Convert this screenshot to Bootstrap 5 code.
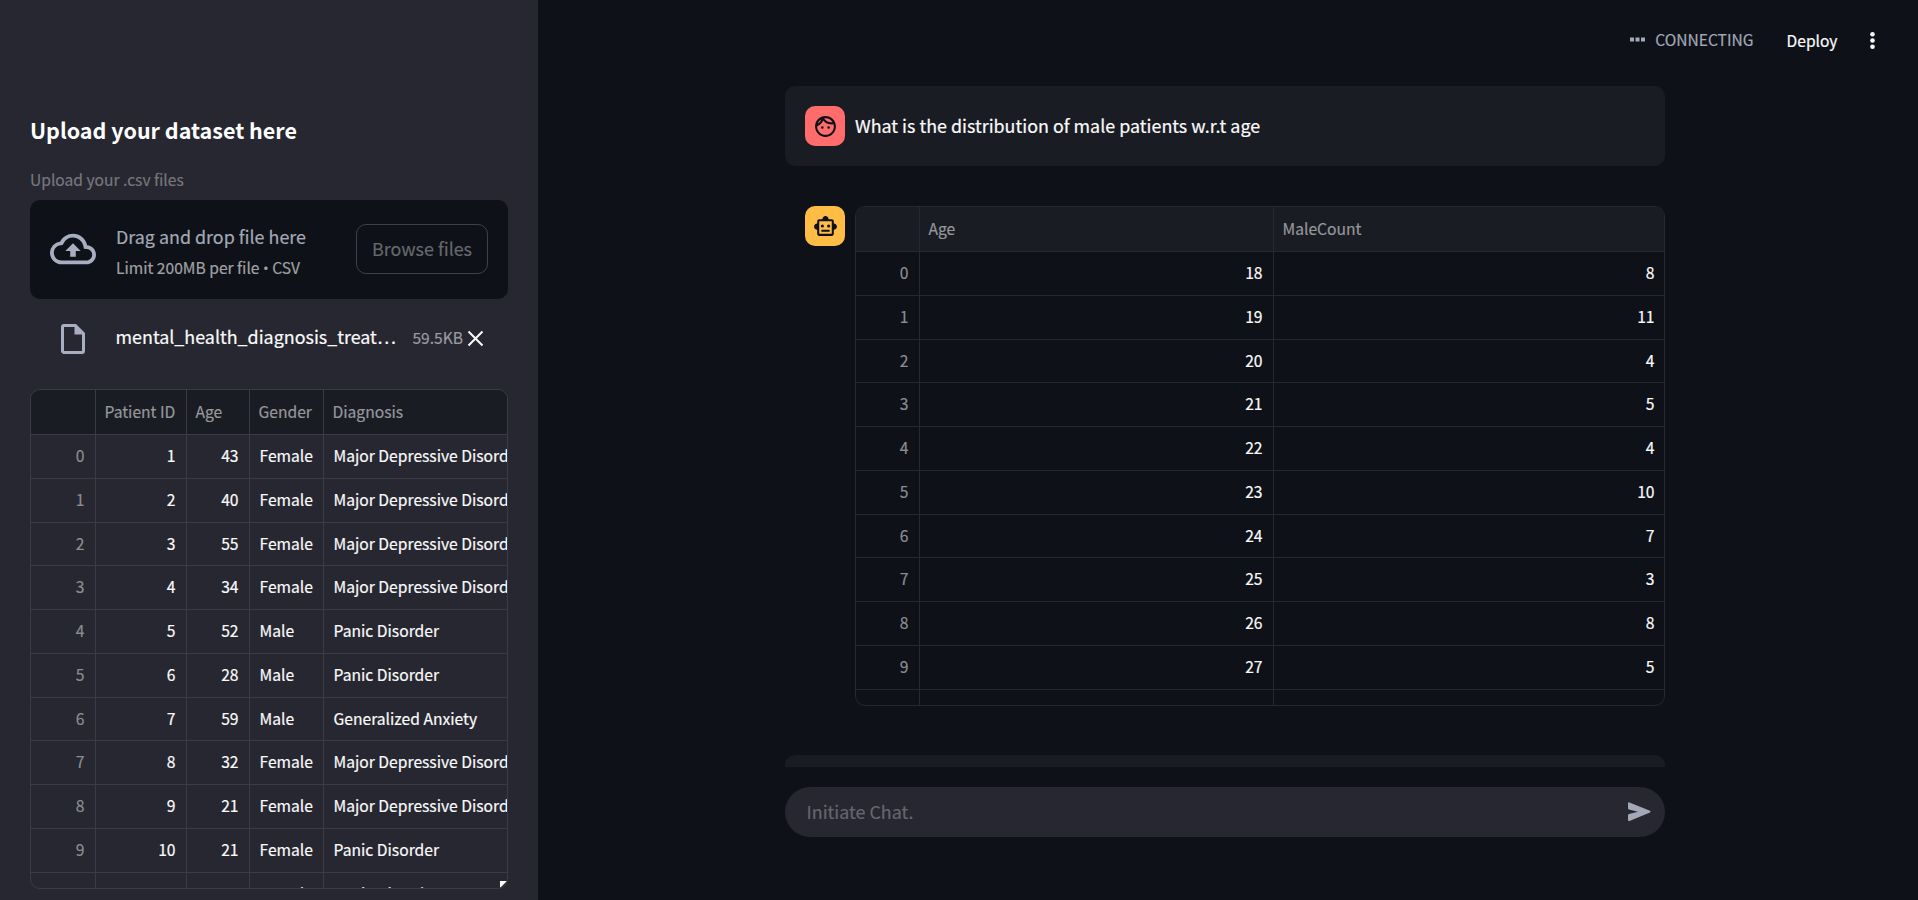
<!DOCTYPE html>
<html lang="en" data-bs-theme="dark">
<head>
<meta charset="utf-8">
<title>Dataset chat</title>
<link href="https://cdn.jsdelivr.net/npm/bootstrap@5.3.0/dist/css/bootstrap.min.css" rel="stylesheet">
<style>
body{background:#0e1117;color:#fafafa;font-family:"Noto Sans CJK SC","Source Sans Pro",sans-serif;font-size:17.9px;line-height:30px;-webkit-text-stroke:.2px currentColor}
.side{width:538px;background:#262730;padding:113px 30px 0}
.side h2{font-size:21.5px;font-weight:700;line-height:34px;color:#fff;-webkit-text-stroke:0}
.fs-s{font-size:15.6px}
.upl-label{color:#76777d;line-height:24px;margin-top:20px;margin-bottom:9px}
.drop{background:#0e1117;border-radius:10px;height:99px;padding:0 20px}
.drop>svg{margin-top:-2px}
.drop .t1{color:#a3a8b4;line-height:28px;margin-top:2px}
.drop .t2{color:#a0a1a4;line-height:24px;margin-top:5px}
.dot{font-family:"Open Sans",sans-serif;font-size:15px}
.btn-browse{width:132px;height:50px;border:1px solid #3f4145;border-radius:10px;color:#66686c;font-size:17.9px;padding:0 0 2px;margin-top:-1px}
.file-row{height:90px;padding:0 20px 11px 25px}
.fname{margin:-5px 0 0 24.500px}
.fsize{color:#999aa2;margin-top:-4px}
.grid{--ln:#3a3b44;border:1px solid var(--ln);border-radius:10px;height:500px;font-size:15.65px}
.grid-main{--ln:#26282d}
.g-row{display:grid;height:43.75px;border-bottom:1px solid var(--ln);line-height:42px}
.g-head{height:45px;background:#1a1c23;color:#96979b;line-height:44px}
.g-row>div{padding:0 10.5px 0 9.500px;white-space:nowrap;border-right:1px solid var(--ln)}
.g-row.g-head>div{padding:0 0 0 8.5px}
.g-row>div:last-child{border-right:0}
.g-side .g-row{grid-template-columns:65px 91px 63px 74px 1fr}
.g-side .g-row>div:last-child{padding-right:0}
.g-main .g-row{grid-template-columns:64px 354px 1fr}
.g-main .g-row>div:last-child{padding-right:9.500px}
.g-row>.ix{color:#8c8d91}
.handle{right:0;bottom:0}
.top{height:86px;padding-right:32px}
.status{height:79px}
.conn{color:#a3a8b8;margin:-2px 33px 0 9.500px}
.deploy{margin-right:22.500px}
.chat-col{width:880px;margin-right:6px}
.msg{background:#1a1c23;border-radius:10px;height:80px;padding:20px}
.ava{width:40px;height:40px;border-radius:10px}
.ava-user{background:#ff6c6c}
.ava-bot{background:#ffbd45}
.q{margin:-3px 0 0 10px}
.answer{margin:40px 0 49px;padding-left:20px;gap:10px}
.nextmsg{height:12px;background:#1a1c23;border-radius:10px 10px 0 0}
.ask{height:50px;border-radius:25px;background:#262730;color:#65666f;padding:0 13px 0 21.5px;margin-top:20px}
.ask span{margin-top:-3px}
</style>
</head>
<body class="vh-100 overflow-hidden d-flex">
<aside class="side flex-shrink-0 vh-100 overflow-hidden">
  <h2 class="m-0">Upload your dataset here</h2>
  <div class="upl-label fs-s">Upload your .csv files</div>
  <div class="drop d-flex align-items-center">
    <svg width="46" height="46" viewBox="0 0 24 24" fill="#a9adc1"><path d="M19.35 10.04A7.49 7.49 0 0 0 12 4C9.11 4 6.6 5.64 5.35 8.04A5.994 5.994 0 0 0 0 14c0 3.31 2.69 6 6 6h13c2.76 0 5-2.24 5-5 0-2.64-2.05-4.78-4.65-4.96zM19 18H6c-2.21 0-4-1.79-4-4 0-2.05 1.53-3.76 3.56-3.97l1.07-.11.5-.95A5.469 5.469 0 0 1 12 6c2.62 0 4.88 1.86 5.39 4.43l.3 1.5 1.53.11A2.98 2.98 0 0 1 22 15c0 1.65-1.35 3-3 3zM8 13h2.55v3h2.9v-3H16l-4-4z"/></svg>
    <div class="ms-3 ps-1 flex-grow-1"><div class="t1">Drag and drop file here</div><div class="t2 fs-s">Limit 200MB per file <span class="dot">•</span> CSV</div></div>
    <button class="btn btn-browse">Browse files</button>
  </div>
  <div class="file-row d-flex align-items-center">
    <svg width="36" height="36" viewBox="0 0 24 24" fill="#a9adc1"><path fill-rule="evenodd" d="M6 2a2 2 0 0 0-2 2v16c0 1.1.9 2 2 2h12a2 2 0 0 0 2-2V8l-6-6H6zm0 2h7v5h5v11H6z"/></svg>
    <div class="flex-grow-1 fname">mental_health_diagnosis_treat…</div>
    <div class="fs-s fsize">59.5KB</div>
    <svg width="25" height="25" viewBox="0 0 25 25" stroke="#fafafa" stroke-width="2" fill="none"><path d="M5.5 5.5l14 14m0-14l-14 14"/></svg>
  </div>
  <div class="grid g-side position-relative overflow-hidden" id="patients">
    <svg class="handle position-absolute" width="7" height="7"><path d="M0 0h7L0 7z" fill="#fff"/></svg>
  </div>
</aside>
<main class="flex-grow-1 d-flex flex-column align-items-center">
  <header class="top w-100 d-flex justify-content-end">
    <div class="d-flex align-items-center fs-s status">
      <svg width="16" height="5" fill="#a3a8b8"><path d="M0 .5h4v4H0zm5.500 0h4v4h-4zm5.500 0h4v4h-4z"/></svg>
      <span class="conn">CONNECTING</span><span class="deploy">Deploy</span>
      <svg width="26" height="26" viewBox="0 0 26 26" fill="#fafafa"><circle cx="12.5" cy="7.200" r="2.300"/><circle cx="12.5" cy="13.500" r="2.300"/><circle cx="12.5" cy="19.800" r="2.300"/></svg>
    </div>
  </header>
  <div class="chat-col">
    <div class="msg d-flex align-items-center">
      <div class="ava ava-user d-flex align-items-center justify-content-center">
        <svg width="25" height="25" viewBox="0 0 24 24" fill="#0e1117"><path d="M10.250 13a1.250 1.250 0 1 1-2.500 0 1.250 1.250 0 0 1 2.500 0zM15 11.750a1.250 1.250 0 1 0 0 2.500 1.250 1.250 0 0 0 0-2.500zM22 12c0 5.520-4.480 10-10 10S2 17.520 2 12 6.480 2 12 2s10 4.480 10 10zM10.660 4.120C12.060 6.440 14.600 8 17.500 8c.460 0 .910-.050 1.340-.120C17.440 5.560 14.900 4 12 4c-.460 0-.910.050-1.340.120zM4.420 9.470a8.046 8.046 0 0 0 3.660-4.440 8.046 8.046 0 0 0-3.660 4.440zM20 12c0-.780-.120-1.530-.330-2.240-.700.150-1.420.240-2.170.240a10 10 0 0 1-7.760-3.690A10.016 10.016 0 0 1 4 11.860c.010.040 0 .090 0 .140 0 4.410 3.590 8 8 8s8-3.590 8-8z"/></svg>
      </div>
      <div class="q">What is the distribution of male patients w.r.t age</div>
    </div>
    <div class="d-flex answer">
      <div class="ava ava-bot d-flex align-items-center justify-content-center flex-shrink-0">
        <svg width="25" height="25" viewBox="0 0 24 24" fill="#0e1117"><path d="M20 9V7c0-1.100-.900-2-2-2h-3c0-1.660-1.340-3-3-3S9 3.340 9 5H6c-1.100 0-2 .900-2 2v2c-1.660 0-3 1.340-3 3s1.340 3 3 3v4c0 1.100.900 2 2 2h12c1.100 0 2-.900 2-2v-4c1.660 0 3-1.340 3-3s-1.340-3-3-3zm-2 10H6V7h12v12zm-9-6a1.500 1.500 0 1 1 0-3 1.500 1.500 0 0 1 0 3zm7.500-1.500a1.500 1.500 0 1 1-3 0 1.500 1.500 0 0 1 3 0zM8 15h8v2H8z"/></svg>
      </div>
      <div class="grid grid-main g-main overflow-hidden flex-grow-1" id="counts"></div>
    </div>
    <div class="nextmsg"></div>
    <div class="ask d-flex align-items-center justify-content-between">
      <span>Initiate Chat.</span>
      <svg width="26" height="26" viewBox="0 0 26 26" fill="#a3a8b8"><path d="M2 4.500Q2 3 3.500 3.400L24 11.800Q25.200 12.700 24 13.600L3.500 22Q2 22.300 2 21V16.200Q2 15.200 3 15L12 12.700 3 10.400Q2 10.200 2 9.200z"/></svg>
    </div>
  </div>
</main>
<script src="https://cdn.jsdelivr.net/npm/bootstrap@5.3.0/dist/js/bootstrap.bundle.min.js"></script>
<script>
const row = (cells, kinds, head) => '<div class="g-row' + (head ? ' g-head' : '') + '">' +
  cells.map((c, i) => `<div class="${head ? '' : kinds[i]}">${c}</div>`).join('') + '</div>';
const M = 'Major Depressive Disord', P = 'Panic Disorder';
const people = [[43,'Female',M],[40,'Female',M],[55,'Female',M],[34,'Female',M],[52,'Male',P],[28,'Male',P],
  [59,'Male','Generalized Anxiety'],[32,'Female',M],[21,'Female',M],[21,'Female',P],[25,'Female',P]];
const k1 = ['ix text-end', 'text-end', 'text-end', '', ''];
document.getElementById('patients').insertAdjacentHTML('afterbegin',
  row(['', 'Patient ID', 'Age', 'Gender', 'Diagnosis'], k1, true) +
  people.map((p, i) => row([i, i + 1, ...p], k1)).join(''));
const k2 = ['ix text-end', 'text-end', 'text-end'];
document.getElementById('counts').innerHTML = row(['', 'Age', 'MaleCount'], k2, true) +
  [8, 11, 4, 5, 4, 10, 7, 3, 8, 5].map((n, i) => row([i, i + 18, n], k2)).join('') + row(['', '', ''], k2);
</script>
</body>
</html>
